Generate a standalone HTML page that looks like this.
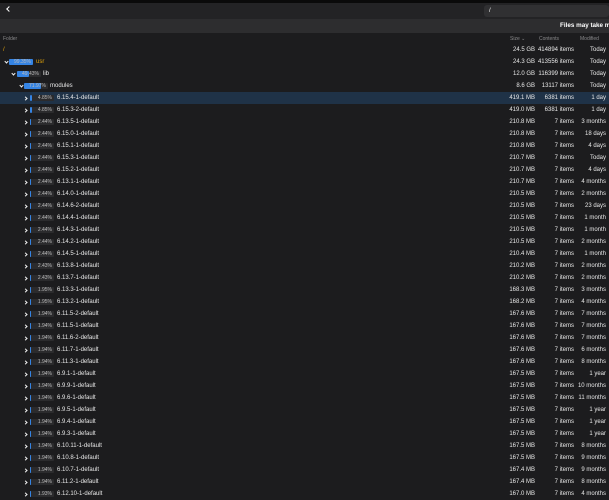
<!DOCTYPE html><html><head><meta charset="utf-8"><style>
*{margin:0;padding:0;box-sizing:border-box}
body{width:609px;height:500px;overflow:hidden;background:#1c1c1e;font-family:"Liberation Sans",sans-serif;color:#e8e8e8;font-size:6px;position:relative}
.top{position:absolute;left:0;top:0;width:609px;height:19px;background:#232325;border-top:3px solid #0a0a0a}
.back{position:absolute;left:7px;top:4px;width:4px;height:4px;border-left:1.5px solid #fff;border-bottom:1.5px solid #fff;transform:rotate(45deg)}
.path{position:absolute;left:484px;top:2px;width:125px;height:12px;background:#303032;border-radius:3px;padding-left:5px;line-height:12px;color:#fff}
.bar2{position:absolute;left:0;top:19px;width:609px;height:14px;background:#2d2d2f}
.msg{position:absolute;left:560px;top:22px;font-weight:bold;color:#fff;white-space:nowrap;font-size:6.3px}
.hdr{position:absolute;top:34px;left:0;width:609px;height:10px;color:#8a8a8c;font-size:5px;line-height:10px}
.hdr span{position:absolute}
.rows{position:absolute;top:44px;left:0;width:609px}
.r{position:relative;height:12px;line-height:12px}
.r.sel{background:#1f3247}
.r span{position:absolute;white-space:nowrap}
.c{width:3px;height:3px;border-right:1.2px solid #eee;border-bottom:1.2px solid #eee}
.c.rt{transform:rotate(-45deg);top:4.5px}
.c.dn{transform:rotate(45deg);top:3.5px}
.b{top:3px;height:6px;width:24px;background:#2b2b2d;border-radius:1px;font-size:5px;line-height:6px;text-align:right;padding-right:2px;color:#bbb}
.b i{position:absolute;left:0;top:0;bottom:0;background:#3584e4;border-radius:1px}
.b em{position:relative;font-style:normal}
.s{right:74px}.n{right:35px}.m{right:3px}
.o{color:#e5a50a}
</style></head><body>
<div class="top"><div class="back"></div><div class="path">/</div></div>
<div class="bar2"></div><div class="msg">Files may take more</div>
<div class="hdr"><span style="left:3px">Folder</span><span style="left:510px">Size ⌄</span><span style="left:539px">Contents</span><span style="left:580px">Modified</span></div>
<div class="rows">
<div class="r"><span class="o" style="left:3px">/</span><span class="s">24.5 GB</span><span class="n">414894 items</span><span class="m">Today</span></div>
<div class="r"><span class="c dn" style="left:5px"></span><span class="b" style="left:9px"><i style="width:99%"></i><em>99.35%</em></span><span class="o" style="left:36px">usr</span><span class="s">24.3 GB</span><span class="n">413556 items</span><span class="m">Today</span></div>
<div class="r"><span class="c dn" style="left:12px"></span><span class="b" style="left:17px"><i style="width:49%"></i><em>49.43%</em></span><span style="left:43px">lib</span><span class="s">12.0 GB</span><span class="n">116399 items</span><span class="m">Today</span></div>
<div class="r"><span class="c dn" style="left:20px"></span><span class="b" style="left:24px"><i style="width:72%"></i><em>71.97%</em></span><span style="left:50px">modules</span><span class="s">8.6 GB</span><span class="n">13117 items</span><span class="m">Today</span></div>
<div class="r sel"><span class="c rt" style="left:24px"></span><span class="b" style="left:30px"><i style="width:2px"></i><em>4.85%</em></span><span style="left:57px">6.15.4-1-default</span><span class="s">419.1 MB</span><span class="n">6381 items</span><span class="m">1 day</span></div>
<div class="r"><span class="c rt" style="left:24px"></span><span class="b" style="left:30px"><i style="width:2px"></i><em>4.85%</em></span><span style="left:57px">6.15.3-2-default</span><span class="s">419.0 MB</span><span class="n">6381 items</span><span class="m">1 day</span></div>
<div class="r"><span class="c rt" style="left:24px"></span><span class="b" style="left:30px"><i style="width:1px"></i><em>2.44%</em></span><span style="left:57px">6.13.5-1-default</span><span class="s">210.8 MB</span><span class="n">7 items</span><span class="m">3 months</span></div>
<div class="r"><span class="c rt" style="left:24px"></span><span class="b" style="left:30px"><i style="width:1px"></i><em>2.44%</em></span><span style="left:57px">6.15.0-1-default</span><span class="s">210.8 MB</span><span class="n">7 items</span><span class="m">18 days</span></div>
<div class="r"><span class="c rt" style="left:24px"></span><span class="b" style="left:30px"><i style="width:1px"></i><em>2.44%</em></span><span style="left:57px">6.15.1-1-default</span><span class="s">210.8 MB</span><span class="n">7 items</span><span class="m">4 days</span></div>
<div class="r"><span class="c rt" style="left:24px"></span><span class="b" style="left:30px"><i style="width:1px"></i><em>2.44%</em></span><span style="left:57px">6.15.3-1-default</span><span class="s">210.7 MB</span><span class="n">7 items</span><span class="m">Today</span></div>
<div class="r"><span class="c rt" style="left:24px"></span><span class="b" style="left:30px"><i style="width:1px"></i><em>2.44%</em></span><span style="left:57px">6.15.2-1-default</span><span class="s">210.7 MB</span><span class="n">7 items</span><span class="m">4 days</span></div>
<div class="r"><span class="c rt" style="left:24px"></span><span class="b" style="left:30px"><i style="width:1px"></i><em>2.44%</em></span><span style="left:57px">6.13.1-1-default</span><span class="s">210.7 MB</span><span class="n">7 items</span><span class="m">4 months</span></div>
<div class="r"><span class="c rt" style="left:24px"></span><span class="b" style="left:30px"><i style="width:1px"></i><em>2.44%</em></span><span style="left:57px">6.14.0-1-default</span><span class="s">210.5 MB</span><span class="n">7 items</span><span class="m">2 months</span></div>
<div class="r"><span class="c rt" style="left:24px"></span><span class="b" style="left:30px"><i style="width:1px"></i><em>2.44%</em></span><span style="left:57px">6.14.6-2-default</span><span class="s">210.5 MB</span><span class="n">7 items</span><span class="m">23 days</span></div>
<div class="r"><span class="c rt" style="left:24px"></span><span class="b" style="left:30px"><i style="width:1px"></i><em>2.44%</em></span><span style="left:57px">6.14.4-1-default</span><span class="s">210.5 MB</span><span class="n">7 items</span><span class="m">1 month</span></div>
<div class="r"><span class="c rt" style="left:24px"></span><span class="b" style="left:30px"><i style="width:1px"></i><em>2.44%</em></span><span style="left:57px">6.14.3-1-default</span><span class="s">210.5 MB</span><span class="n">7 items</span><span class="m">1 month</span></div>
<div class="r"><span class="c rt" style="left:24px"></span><span class="b" style="left:30px"><i style="width:1px"></i><em>2.44%</em></span><span style="left:57px">6.14.2-1-default</span><span class="s">210.5 MB</span><span class="n">7 items</span><span class="m">2 months</span></div>
<div class="r"><span class="c rt" style="left:24px"></span><span class="b" style="left:30px"><i style="width:1px"></i><em>2.44%</em></span><span style="left:57px">6.14.5-1-default</span><span class="s">210.4 MB</span><span class="n">7 items</span><span class="m">1 month</span></div>
<div class="r"><span class="c rt" style="left:24px"></span><span class="b" style="left:30px"><i style="width:1px"></i><em>2.43%</em></span><span style="left:57px">6.13.8-1-default</span><span class="s">210.2 MB</span><span class="n">7 items</span><span class="m">2 months</span></div>
<div class="r"><span class="c rt" style="left:24px"></span><span class="b" style="left:30px"><i style="width:1px"></i><em>2.43%</em></span><span style="left:57px">6.13.7-1-default</span><span class="s">210.2 MB</span><span class="n">7 items</span><span class="m">2 months</span></div>
<div class="r"><span class="c rt" style="left:24px"></span><span class="b" style="left:30px"><i style="width:1px"></i><em>1.95%</em></span><span style="left:57px">6.13.3-1-default</span><span class="s">168.3 MB</span><span class="n">7 items</span><span class="m">3 months</span></div>
<div class="r"><span class="c rt" style="left:24px"></span><span class="b" style="left:30px"><i style="width:1px"></i><em>1.95%</em></span><span style="left:57px">6.13.2-1-default</span><span class="s">168.2 MB</span><span class="n">7 items</span><span class="m">4 months</span></div>
<div class="r"><span class="c rt" style="left:24px"></span><span class="b" style="left:30px"><i style="width:1px"></i><em>1.94%</em></span><span style="left:57px">6.11.5-2-default</span><span class="s">167.6 MB</span><span class="n">7 items</span><span class="m">7 months</span></div>
<div class="r"><span class="c rt" style="left:24px"></span><span class="b" style="left:30px"><i style="width:1px"></i><em>1.94%</em></span><span style="left:57px">6.11.5-1-default</span><span class="s">167.6 MB</span><span class="n">7 items</span><span class="m">7 months</span></div>
<div class="r"><span class="c rt" style="left:24px"></span><span class="b" style="left:30px"><i style="width:1px"></i><em>1.94%</em></span><span style="left:57px">6.11.6-2-default</span><span class="s">167.6 MB</span><span class="n">7 items</span><span class="m">7 months</span></div>
<div class="r"><span class="c rt" style="left:24px"></span><span class="b" style="left:30px"><i style="width:1px"></i><em>1.94%</em></span><span style="left:57px">6.11.7-1-default</span><span class="s">167.6 MB</span><span class="n">7 items</span><span class="m">6 months</span></div>
<div class="r"><span class="c rt" style="left:24px"></span><span class="b" style="left:30px"><i style="width:1px"></i><em>1.94%</em></span><span style="left:57px">6.11.3-1-default</span><span class="s">167.6 MB</span><span class="n">7 items</span><span class="m">8 months</span></div>
<div class="r"><span class="c rt" style="left:24px"></span><span class="b" style="left:30px"><i style="width:1px"></i><em>1.94%</em></span><span style="left:57px">6.9.1-1-default</span><span class="s">167.5 MB</span><span class="n">7 items</span><span class="m">1 year</span></div>
<div class="r"><span class="c rt" style="left:24px"></span><span class="b" style="left:30px"><i style="width:1px"></i><em>1.94%</em></span><span style="left:57px">6.9.9-1-default</span><span class="s">167.5 MB</span><span class="n">7 items</span><span class="m">10 months</span></div>
<div class="r"><span class="c rt" style="left:24px"></span><span class="b" style="left:30px"><i style="width:1px"></i><em>1.94%</em></span><span style="left:57px">6.9.6-1-default</span><span class="s">167.5 MB</span><span class="n">7 items</span><span class="m">11 months</span></div>
<div class="r"><span class="c rt" style="left:24px"></span><span class="b" style="left:30px"><i style="width:1px"></i><em>1.94%</em></span><span style="left:57px">6.9.5-1-default</span><span class="s">167.5 MB</span><span class="n">7 items</span><span class="m">1 year</span></div>
<div class="r"><span class="c rt" style="left:24px"></span><span class="b" style="left:30px"><i style="width:1px"></i><em>1.94%</em></span><span style="left:57px">6.9.4-1-default</span><span class="s">167.5 MB</span><span class="n">7 items</span><span class="m">1 year</span></div>
<div class="r"><span class="c rt" style="left:24px"></span><span class="b" style="left:30px"><i style="width:1px"></i><em>1.94%</em></span><span style="left:57px">6.9.3-1-default</span><span class="s">167.5 MB</span><span class="n">7 items</span><span class="m">1 year</span></div>
<div class="r"><span class="c rt" style="left:24px"></span><span class="b" style="left:30px"><i style="width:1px"></i><em>1.94%</em></span><span style="left:57px">6.10.11-1-default</span><span class="s">167.5 MB</span><span class="n">7 items</span><span class="m">8 months</span></div>
<div class="r"><span class="c rt" style="left:24px"></span><span class="b" style="left:30px"><i style="width:1px"></i><em>1.94%</em></span><span style="left:57px">6.10.8-1-default</span><span class="s">167.5 MB</span><span class="n">7 items</span><span class="m">9 months</span></div>
<div class="r"><span class="c rt" style="left:24px"></span><span class="b" style="left:30px"><i style="width:1px"></i><em>1.94%</em></span><span style="left:57px">6.10.7-1-default</span><span class="s">167.4 MB</span><span class="n">7 items</span><span class="m">9 months</span></div>
<div class="r"><span class="c rt" style="left:24px"></span><span class="b" style="left:30px"><i style="width:1px"></i><em>1.94%</em></span><span style="left:57px">6.11.2-1-default</span><span class="s">167.4 MB</span><span class="n">7 items</span><span class="m">8 months</span></div>
<div class="r"><span class="c rt" style="left:24px"></span><span class="b" style="left:30px"><i style="width:1px"></i><em>1.93%</em></span><span style="left:57px">6.12.10-1-default</span><span class="s">167.0 MB</span><span class="n">7 items</span><span class="m">4 months</span></div>
</div>
</body></html>
